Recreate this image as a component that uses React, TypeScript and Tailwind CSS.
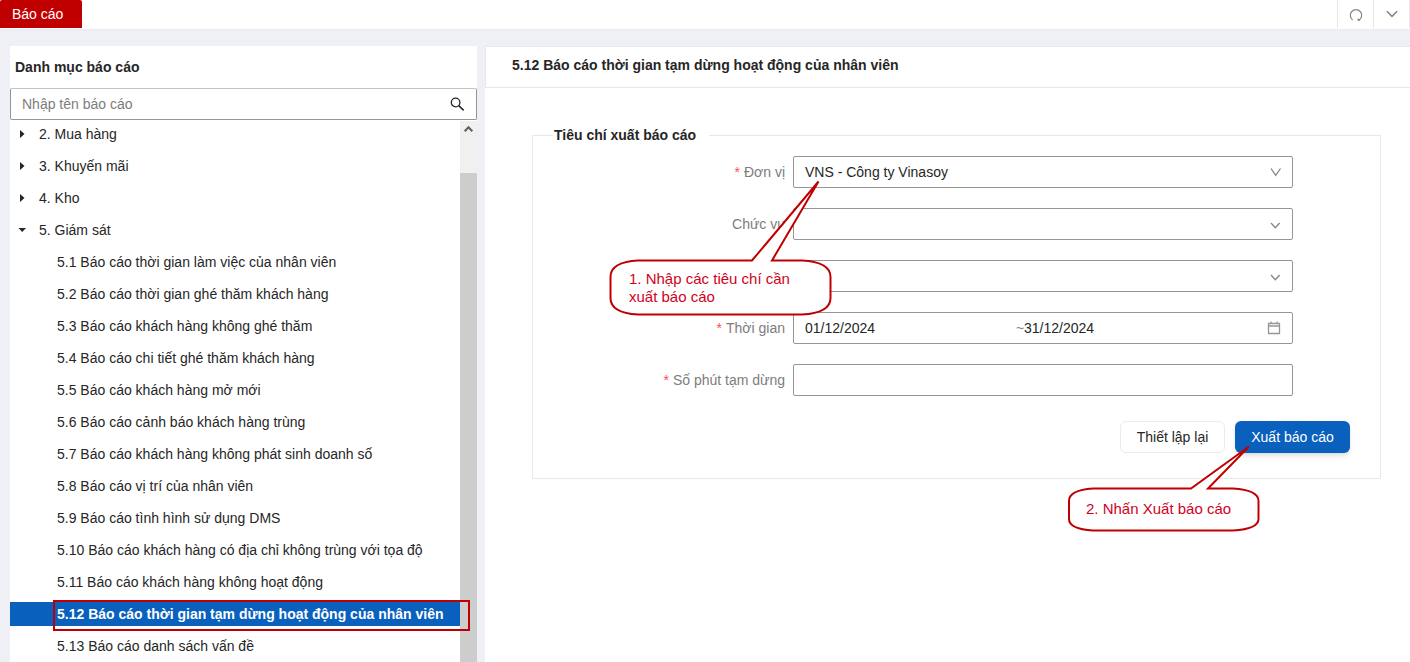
import type { ReactNode } from 'react';

const groups = ['2. Mua hàng', '3. Khuyến mãi', '4. Kho'];

const reports = [
  '5.1 Báo cáo thời gian làm việc của nhân viên',
  '5.2 Báo cáo thời gian ghé thăm khách hàng',
  '5.3 Báo cáo khách hàng không ghé thăm',
  '5.4 Báo cáo chi tiết ghé thăm khách hàng',
  '5.5 Báo cáo khách hàng mở mới',
  '5.6 Báo cáo cảnh báo khách hàng trùng',
  '5.7 Báo cáo khách hàng không phát sinh doanh số',
  '5.8 Báo cáo vị trí của nhân viên',
  '5.9 Báo cáo tình hình sử dụng DMS',
  '5.10 Báo cáo khách hàng có địa chỉ không trùng với tọa độ',
  '5.11 Báo cáo khách hàng không hoạt động',
  '5.12 Báo cáo thời gian tạm dừng hoạt động của nhân viên',
  '5.13 Báo cáo danh sách vấn đề',
];

const selected = 11;

function Chevron({ tall = false }: { tall?: boolean }) {
  return (
    <svg
      className="pointer-events-none absolute top-2 right-2.5 size-4 text-[#858585]"
      viewBox="0 0 16 16"
      fill="none"
      stroke="currentColor"
      strokeWidth="1.3"
      aria-hidden="true"
    >
      <path d={tall ? 'M4 4.5 8.7 11.3 13.5 4.5' : 'M4 7 8.3 11.7 12.6 7'} />
    </svg>
  );
}

function Field({ id, label, required, children }: { id: string; label?: string; required?: boolean; children: ReactNode }) {
  return (
    <div className="grid grid-cols-[260fr_500fr_87fr] items-center">
      <label htmlFor={id} className="pr-2 text-right text-[#7d7d7d]">
        {required && <span className="mr-1 text-[#ff4d4f]">*</span>}
        {label}
      </label>
      <div className="relative">{children}</div>
    </div>
  );
}

const box = 'h-8 w-full rounded-xs border border-[#969696] bg-white px-[11px] text-[#262626]';

export default function App() {
  return (
    <div className="flex h-screen flex-col overflow-hidden bg-[#eff0f5] font-['Liberation_Sans',Arial,sans-serif] text-sm text-[#262626]">
      <header className="flex h-[30px] shrink-0 items-start justify-between border-b border-[#ebecef] bg-white">
        <button className="h-7 w-[82px] rounded-t-xs bg-[#c00000] pl-3 text-left text-white">Báo cáo</button>
        <div className="flex h-7 border-r border-[#e8e8e8]">
          <button aria-label="Tải lại" className="flex w-9 items-center justify-center border-l border-[#e8e8e8] text-[#858585]">
            <svg className="mt-0.5 size-4" viewBox="0 0 16 16" fill="none" stroke="currentColor" strokeWidth="1.2" aria-hidden="true">
              <path d="M4.6 12.9A5.7 5.7 0 1 1 11.4 12.9" />
              <path d="M9.6 11.6 12.4 12.3 11.2 14.1 9.6 14Z" fill="currentColor" stroke="none" />
            </svg>
          </button>
          <button aria-label="Mở rộng" className="flex w-9 items-center justify-center border-l border-[#e8e8e8] text-[#858585]">
            <svg className="size-4" viewBox="0 0 16 16" fill="none" stroke="currentColor" strokeWidth="1.5" aria-hidden="true">
              <path d="M2.8 5.3 8 10.4 13.2 5.3" />
            </svg>
          </button>
        </div>
      </header>

      <div className="flex min-h-0 grow gap-2 pt-4 pl-2.5">
        <aside className="flex w-[467px] shrink-0 flex-col bg-white">
          <h2 className="px-[5px] py-[11px] leading-5 font-bold">Danh mục báo cáo</h2>
          <div className="relative shrink-0">
            <input
              aria-label="Nhập tên báo cáo"
              placeholder="Nhập tên báo cáo"
              className="h-8 w-full rounded-xs border border-[#969696] border-t-[#c4c4c4] bg-white px-[11px] placeholder:text-[#7d7d7d]"
            />
            <svg className="absolute top-2 right-3 size-4 text-[#262626]" viewBox="0 0 16 16" fill="none" stroke="currentColor" strokeWidth="1.3" aria-hidden="true">
              <circle cx="6.6" cy="6.5" r="4.3" />
              <path d="M9.7 9.6 14.7 14.3" strokeWidth="1.6" />
            </svg>
          </div>
          <div className="flex min-h-0 grow pt-px">
            <ul className="flex min-w-0 grow flex-col gap-2 pt-px">
              {groups.map((g) => (
                <li key={g} className="flex h-6 shrink-0 items-center">
                  <svg className="mr-3 ml-2 h-2 w-[9px]" viewBox="0 0 9 8" fill="currentColor" aria-hidden="true">
                    <path d="M2 0 6.500 4 2 8Z" />
                  </svg>
                  {g}
                </li>
              ))}
              <li className="shrink-0">
                <div className="flex h-6 items-center">
                  <svg className="mr-3 ml-2 h-2 w-[9px]" viewBox="0 0 9 8" fill="currentColor" aria-hidden="true">
                    <path d="M.5 2H8L4.2 6Z" />
                  </svg>
                  5. Giám sát
                </div>
                <ul className="mt-2 flex flex-col gap-2">
                  {reports.map((r, i) =>
                    i === selected ? (
                      <li key={r} className="relative bg-[#0960bd] pl-[47px] leading-6 font-bold whitespace-nowrap text-white">
                        {r}
                        <span className="absolute -top-0.5 -right-2.5 -bottom-[5px] left-[43px] z-10 border-2 border-[#c00000]" />
                      </li>
                    ) : (
                      <li key={r} className="pl-[47px] leading-6 whitespace-nowrap">
                        {r}
                      </li>
                    ),
                  )}
                </ul>
              </li>
            </ul>
            <div className="flex w-[17px] shrink-0 flex-col bg-[#f0f0f0]" aria-hidden="true">
              <svg className="mb-9 h-4 w-[17px] shrink-0" viewBox="0 0 17 16" fill="none" stroke="#606060" strokeWidth="2">
                <path d="M4.7 10.3 8.5 6.3 12.3 10.3" />
              </svg>
              <div className="grow bg-[#cdcdcd]" />
            </div>
          </div>
        </aside>

        <main className="min-w-0 grow bg-white">
          <h1 className="border border-[#e8e8e8] border-r-0 pt-2 pb-3 pl-[26px] leading-5 font-bold">
            5.12 Báo cáo thời gian tạm dừng hoạt động của nhân viên
          </h1>
          <form className="pt-[37px] pr-[29px] pl-[47px]" onSubmit={(e) => e.preventDefault()}>
            <fieldset className="border border-[#e8e8e8] pt-2.5 pb-[25px]">
              <legend className="ml-5 pr-[13px] pl-px leading-[21px] font-bold">Tiêu chí xuất báo cáo</legend>
              <div className="flex flex-col gap-5">
                <Field id="unit" label="Đơn vị" required>
                  <select id="unit" className={`${box} appearance-none`}>
                    <option>VNS - Công ty Vinasoy</option>
                  </select>
                  <Chevron tall />
                  <div className="absolute top-6 -left-[185px] z-10 h-[137px] w-[225px]">
                    <svg className="size-full" viewBox="0 0 225 137" fill="#fff" stroke="#c00000" strokeWidth="2" aria-hidden="true">
                      <path d="M30 80.5H144L210.500 1.500 164 80.500H194Q222.500 82 222.500 97V118Q222.500 133 194 134.500H30Q2.500 133 2.500 118V97Q2.500 82 30 80.500Z" />
                    </svg>
                    <p className="absolute top-[90px] left-[21px] w-[180px] text-[15px] leading-[18px] text-[#d0021b]">
                      1. Nhập các tiêu chí cần
                      <br />
                      xuất báo cáo
                    </p>
                  </div>
                </Field>
                <Field id="role" label="Chức vụ">
                  <select id="role" className={`${box} appearance-none`} />
                  <Chevron />
                </Field>
                <Field id="staff">
                  <select id="staff" aria-label="Nhân viên" className={`${box} appearance-none`} />
                  <Chevron />
                </Field>
                <Field id="from" label="Thời gian" required>
                  <div className={`${box} flex items-center`}>
                    <input id="from" defaultValue="01/12/2024" className="w-0 grow outline-none" />
                    <span className="w-2 text-[#7d7d7d]">~</span>
                    <input aria-label="Đến ngày" defaultValue="31/12/2024" className="w-0 grow outline-none" />
                    <svg className="ml-8 size-3.5 shrink-0 text-[#969696]" viewBox="0 0 14 14" fill="none" stroke="currentColor" aria-hidden="true">
                      <path d="M1.500 2.500H12.500V12.500H1.500ZM1.500 5H12.500M4 .5V3M10 .5V3" strokeWidth="1.300" />
                    </svg>
                  </div>
                </Field>
                <Field id="minutes" label="Số phút tạm dừng" required>
                  <input id="minutes" className={`${box} block`} />
                </Field>
              </div>
              <div className="mt-[25px] flex justify-end gap-2.5 pr-[30px]">
                <button type="reset" className="h-8 w-[105px] rounded-md border border-[#ebebeb] bg-white">
                  Thiết lập lại
                </button>
                <div className="relative">
                  <button type="submit" className="block h-8 w-[115px] rounded-md bg-[#0960bd] text-white shadow-md">
                    Xuất báo cáo
                  </button>
                  <div className="absolute top-6 -left-[168px] z-10 h-[88px] w-[194px]">
                    <svg className="size-full" viewBox="0 0 194 88" fill="#fff" stroke="#c00000" strokeWidth="2" aria-hidden="true">
                      <path d="M26 43.500H124L182 1.500 141 43.500H166Q191.500 45 191.500 56V74Q191.500 84 166 85.500H26Q2 84 2 74V56Q2 45 26 43.500Z" />
                    </svg>
                    <p className="absolute top-[55px] left-[19px] text-[15px] leading-[18px] whitespace-nowrap text-[#d0021b]">
                      2. Nhấn Xuất báo cáo
                    </p>
                  </div>
                </div>
              </div>
            </fieldset>
          </form>
        </main>
      </div>
    </div>
  );
}
